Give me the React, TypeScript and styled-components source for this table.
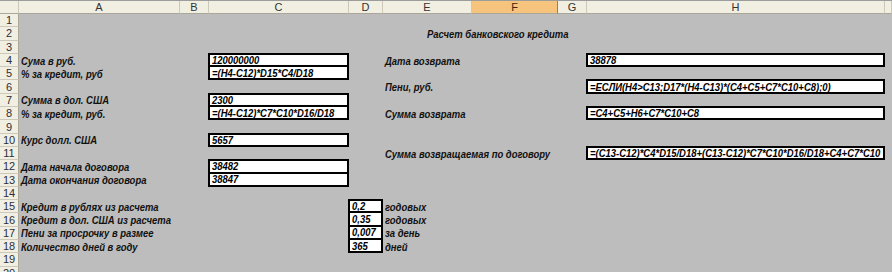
import React from "react";
import styled, { createGlobalStyle } from "styled-components";

const GlobalStyle = createGlobalStyle`
  html, body {
    margin: 0;
    padding: 0;
    background: #bdbdbd;
  }
  body {
    font-family: "Liberation Sans", Arial, sans-serif;
    overflow: hidden;
  }
`;

const Sheet = styled.div`
  display: grid;
  grid-template-columns: 19px 161px 29px 140px 34px 89px 86px 29px 298px 1fr;
  grid-template-rows: 13px repeat(20, 13.3px);
  width: 892px;
  height: 272px;
  overflow: hidden;
  box-sizing: border-box;
  border-top: 1px solid #9c9c9c;
  background: #bdbdbd;
`;

const ColHead = styled.div<{ $c: number; $active?: boolean }>`
  grid-row: 1;
  grid-column: ${(p) => p.$c};
  display: flex;
  align-items: center;
  justify-content: center;
  box-sizing: border-box;
  background: ${(p) => (p.$active ? "#f6c47c" : "#f1efe2")};
  border-right: 1px solid ${(p) => (p.$active ? "#8c7b96" : "#cdc9ba")};
  border-bottom: 1px solid #aaa699;
  font-size: 11px;
  color: ${(p) => (p.$active ? "#3a2a10" : "#333")};
`;

const RowHead = styled.div<{ $r: number }>`
  grid-column: 1;
  grid-row: ${(p) => p.$r + 1};
  display: flex;
  align-items: center;
  justify-content: center;
  box-sizing: border-box;
  background: #f1efe2;
  border-right: 1px solid #aaa699;
  border-bottom: 1px solid #cdc9ba;
  font-size: 11px;
  color: #2e2e3a;
  overflow: hidden;
`;

const Cell = styled.div<{ $r: number; $c: number; $span?: number }>`
  grid-row: ${(p) => p.$r + 1};
  grid-column: ${(p) => p.$c + 1} / span ${(p) => p.$span ?? 1};
  display: flex;
  align-items: center;
  min-width: 0;
  white-space: nowrap;
  font-size: 11px;
  font-weight: bold;
  font-style: italic;
  color: #111;
`;

const Label = styled(Cell)<{ $indent?: number }>`
  padding-left: ${(p) => p.$indent ?? 2}px;
  overflow: visible;
`;

const Box = styled(Cell)<{ $joined?: boolean }>`
  box-sizing: border-box;
  margin-left: -1px;
  margin-top: ${(p) => (p.$joined ? 0 : -1)}px;
  background: #fff;
  border: 2px solid #000;
  border-top-width: ${(p) => (p.$joined ? 0 : 2)}px;
  padding-left: 2px;
  overflow: hidden;
  color: #000;
`;

const Txt = styled.span`
  display: inline-block;
  transform: scaleX(0.86);
  transform-origin: left center;
`;

const columns = ["A", "B", "C", "D", "E", "F", "G", "H", ""];

const leftLabels: [number, string][] = [
  [4, "Сума в руб."],
  [5, "% за кредит, руб"],
  [7, "Сумма в дол. США"],
  [8, "% за кредит, руб."],
  [10, "Курс долл. США"],
  [12, "Дата начала договора"],
  [13, "Дата окончания договора"],
  [15, "Кредит в рублях из расчета"],
  [16, "Кредит в дол. США из расчета"],
  [17, "Пени за просрочку в размее"],
  [18, "Количество дней в году"],
];

const cBoxes: [number, string, boolean][] = [
  [4, "120000000", false],
  [5, "=(H4-C12)*D15*C4/D18", true],
  [7, "2300", false],
  [8, "=(H4-C12)*C7*C10*D16/D18", true],
  [10, "5657", false],
  [12, "38482", false],
  [13, "38847", true],
];

const rightRows: [number, string, string][] = [
  [4, "Дата возврата", "38878"],
  [6, "Пени, руб.", "=ЕСЛИ(H4>C13;D17*(H4-C13)*(C4+C5+C7*C10+C8);0)"],
  [8, "Сумма возврата", "=C4+C5+H6+C7*C10+C8"],
  [11, "Сумма возвращаемая по договору", "=(C13-C12)*C4*D15/D18+(C13-C12)*C7*C10*D16/D18+C4+C7*C10"],
];

const rates: [number, string, string][] = [
  [15, "0,2", "годовых"],
  [16, "0,35", "годовых"],
  [17, "0,007", "за день"],
  [18, "365", "дней"],
];

export default function App() {
  return (
    <>
      <GlobalStyle />
      <Sheet>
        <ColHead $c={1} />
        {columns.map((name, i) => (
          <ColHead key={i} $c={i + 2} $active={name === "F"}>
            {name}
          </ColHead>
        ))}
        {Array.from({ length: 20 }, (_, i) => (
          <RowHead key={i} $r={i + 1}>
            {i + 1}
          </RowHead>
        ))}

        <Label $r={2} $c={5} $span={3} $indent={44}>
          <Txt>Расчет банковского кредита</Txt>
        </Label>

        {leftLabels.map(([r, text]) => (
          <Label key={r} $r={r} $c={1}>
            <Txt>{text}</Txt>
          </Label>
        ))}

        {cBoxes.map(([r, value, joined]) => (
          <Box key={r} $r={r} $c={3} $joined={joined}>
            <Txt>{value}</Txt>
          </Box>
        ))}

        {rightRows.map(([r, label, value]) => (
          <React.Fragment key={r}>
            <Label $r={r} $c={5} $span={2}>
              <Txt>{label}</Txt>
            </Label>
            <Box $r={r} $c={8}>
              <Txt>{value}</Txt>
            </Box>
          </React.Fragment>
        ))}

        {rates.map(([r, value, unit], i) => (
          <React.Fragment key={r}>
            <Box $r={r} $c={4} $joined={i > 0}>
              <Txt>{value}</Txt>
            </Box>
            <Label $r={r} $c={5}>
              <Txt>{unit}</Txt>
            </Label>
          </React.Fragment>
        ))}
      </Sheet>
    </>
  );
}
